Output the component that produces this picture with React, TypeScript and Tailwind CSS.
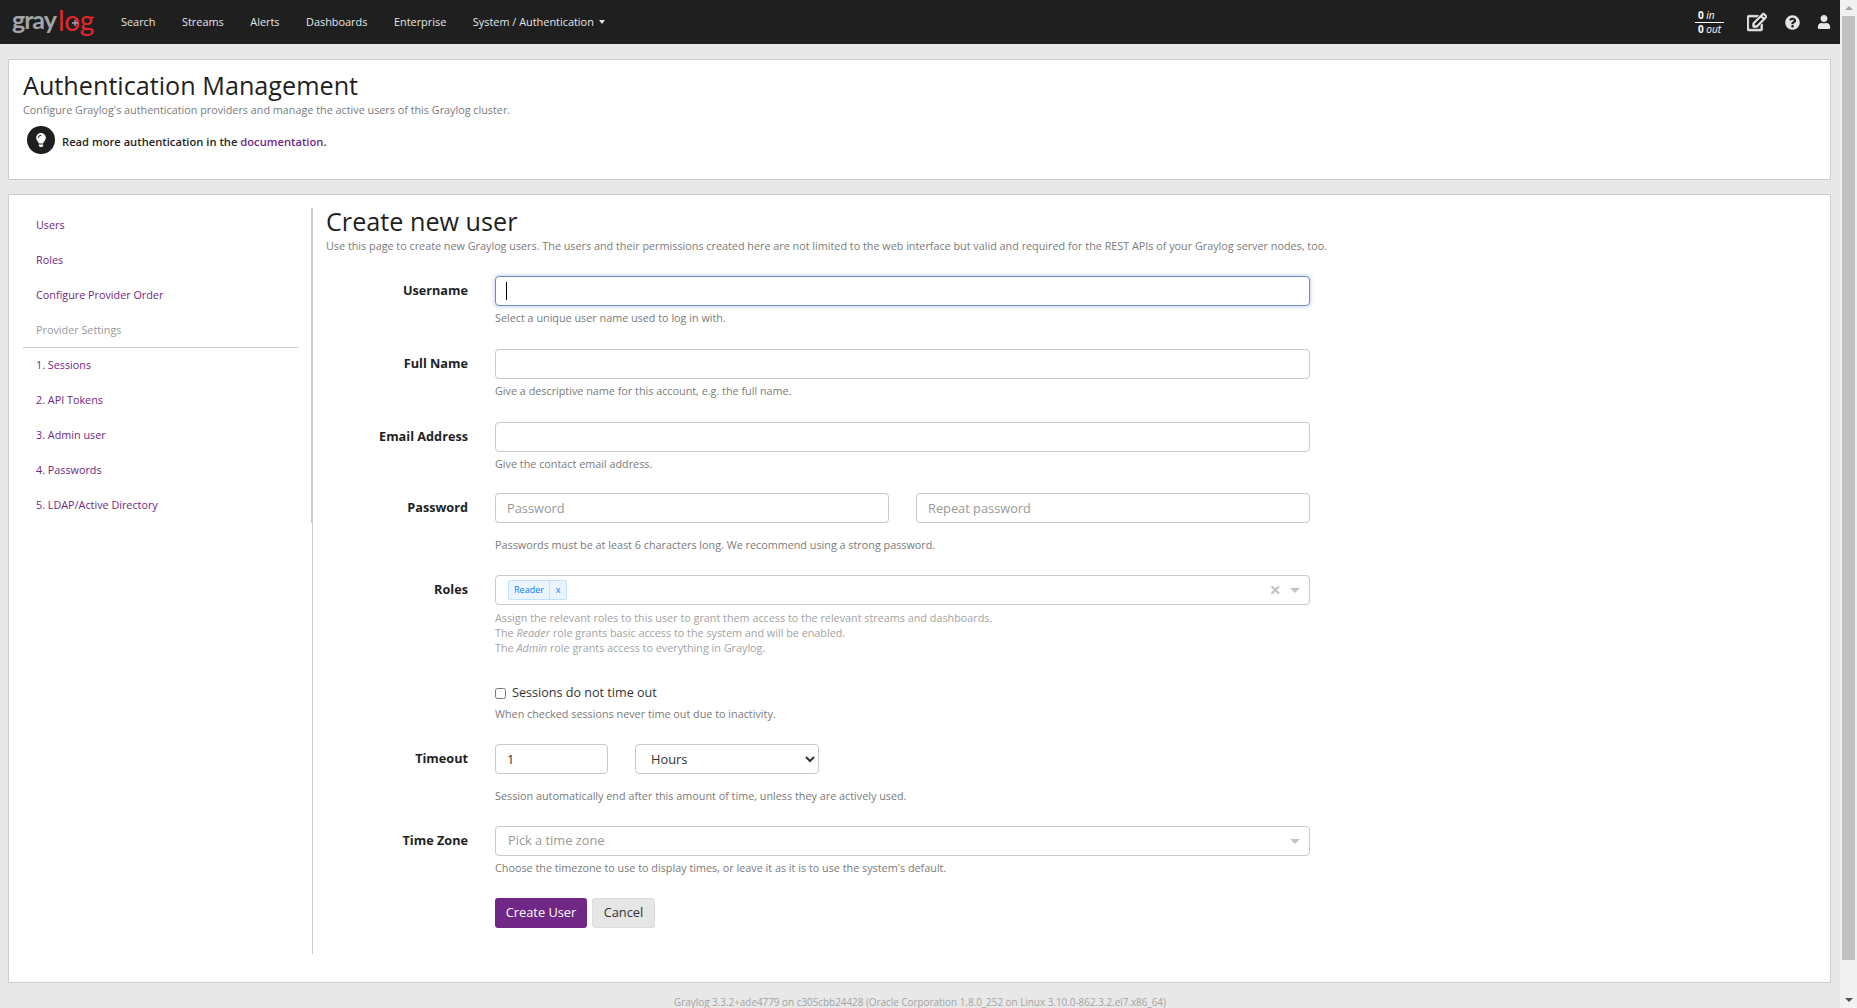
import { FaLightbulb, FaQuestionCircle, FaRegEdit, FaUser } from "react-icons/fa";

const navItems = ["Search", "Streams", "Alerts", "Dashboards", "Enterprise"];

const sideTop = ["Users", "Roles", "Configure Provider Order"];
const sideProviders = ["1. Sessions", "2. API Tokens", "3. Admin user", "4. Passwords", "5. LDAP/Active Directory"];

const fieldClass =
  "h-[30px] rounded-[4px] border bg-white px-[11px] text-[12.8px] text-[#333] placeholder:text-[#999] outline-none";
const helpClass = "text-[10.8px] leading-[17px] text-[#7b7b7b]";

const Arrow = () => <span className="h-0 w-0 border-x-[5px] border-t-[5px] border-x-transparent border-t-[#c4c4c4]" />;

const Label = ({ children }: { children: string }) => (
  <label className="w-[169px] shrink-0 pr-[27px] pt-[3.5px] text-right text-[12.7px] leading-[20px] font-bold text-[#1f1f1f]">
    {children}
  </label>
);

const Logo = () => (
  <div className="relative flex h-[44px] w-[108px] items-center pl-[12px] font-['Lato',sans-serif] leading-none">
    <span className="-mt-[5px] text-[25px] font-bold tracking-[-1px] text-[#a3a5a8]">gray</span>
    <span className="-mt-[5px] ml-[2px] text-[28px] tracking-[-0.3px] text-[#e3262f]">log</span>
    <svg className="absolute top-[20px] left-[72px] h-[6px] w-[6px]" viewBox="0 0 6 6">
      <path d="M3 0v6M0 3h6" stroke="#a3a5a8" strokeWidth="1.4" />
    </svg>
  </div>
);

const TopBar = () => (
  <header className="flex h-[44px] shrink-0 items-center bg-[#1f1f1f] text-[10.9px] text-[#e6e6e6]">
    <Logo />
    <nav className="flex items-center gap-[26.5px] pl-[13px]">
      {navItems.map((item) => (
        <a key={item} className="cursor-pointer">
          {item}
        </a>
      ))}
      <a className="flex cursor-pointer items-center gap-[5px]">
        System / Authentication
        <span className="h-0 w-0 border-x-[3.5px] border-t-[4px] border-x-transparent border-t-[#e6e6e6]" />
      </a>
    </nav>
    <div className="ml-auto flex items-center pr-[9px]">
      <div className="mr-[23px] flex w-[29px] flex-col text-[10px] leading-[13px] font-bold text-white">
        <span className="w-full border-b border-white pl-[3px]">
          0 <i className="font-normal">in</i>
        </span>
        <span className="pl-[3px] whitespace-nowrap">
          0 <i className="font-normal">out</i>
        </span>
      </div>
      <FaRegEdit className="mr-[18px] text-[20px]" stroke="currentColor" strokeWidth={20} />
      <FaQuestionCircle className="mr-[17px] text-[15px]" />
      <FaUser className="text-[14px]" />
    </div>
  </header>
);

const Sidebar = () => (
  <aside className="w-[289px] shrink-0 self-start border-r border-[#cccccc] pr-[13px] text-[10.8px] text-[#702785]">
    {sideTop.map((item) => (
      <a key={item} className="flex h-[35px] items-center px-[13px] pb-px">
        {item}
      </a>
    ))}
    <div className="flex h-[35px] items-center border-b border-[#cccccc] px-[13px] text-[#9a9a9a]">Provider Settings</div>
    {sideProviders.map((item) => (
      <a key={item} className="flex h-[35px] items-center px-[13px] pb-px">
        {item}
      </a>
    ))}
  </aside>
);

const CreateUserForm = () => (
  <section className="h-[746px] flex-1 border-l border-[#cccccc] pl-[13px]">
    <h1 className="-mt-px text-[25.2px] leading-[28px] text-[#1f1f1f]">Create new user</h1>
    <p className="mt-[3px] text-[10.8px] leading-[16px] text-[#7b7b7b]">
      Use this page to create new Graylog users. The users and their permissions created here are not limited to the web
      interface but valid and required for the REST APIs of your Graylog server nodes, too.
    </p>

    <div className="mt-[22px] w-[984px]">
      <div className="flex">
        <Label>Username</Label>
        <div className="flex-1">
          <div className="relative">
            <input className={`${fieldClass} w-full border-[#6b8bc9] shadow-[0_0_4px_rgba(102,130,200,0.5)]`} />
            <span className="absolute top-[6px] left-[11px] h-[18px] w-px bg-black" />
          </div>
          <p className={`mt-[3px] ${helpClass}`}>Select a unique user name used to log in with.</p>
        </div>
      </div>

      <div className="mt-[23px] flex">
        <Label>Full Name</Label>
        <div className="flex-1">
          <input className={`${fieldClass} w-full border-[#c9c9c9]`} />
          <p className={`mt-[3px] ${helpClass}`}>Give a descriptive name for this account, e.g. the full name.</p>
        </div>
      </div>

      <div className="mt-[23px] flex">
        <Label>Email Address</Label>
        <div className="flex-1">
          <input className={`${fieldClass} w-full border-[#c9c9c9]`} />
          <p className={`mt-[3px] ${helpClass}`}>Give the contact email address.</p>
        </div>
      </div>

      <div className="mt-[21px] flex">
        <Label>Password</Label>
        <div className="flex-1">
          <div className="flex gap-[27px]">
            <input className={`${fieldClass} w-[394px] border-[#c9c9c9]`} placeholder="Password" />
            <input className={`${fieldClass} min-w-0 flex-1 border-[#c9c9c9]`} placeholder="Repeat password" />
          </div>
          <p className={`mt-[13px] ${helpClass}`}>Passwords must be at least 6 characters long. We recommend using a strong password.</p>
        </div>
      </div>

      <div className="mt-[22px] flex">
        <Label>Roles</Label>
        <div className="flex-1">
          <div className="flex h-[30px] items-center rounded-[4px] border border-[#c9c9c9] bg-white pr-[9px] pl-[12px]">
            <span className="flex h-[20px] items-center rounded-[2px] border border-[#c2e0ff] bg-[#ebf5ff] text-[9px] text-[#007eff]">
              <span className="flex h-full w-[41px] items-center justify-center border-r border-[#c2e0ff]">Reader</span>
              <span className="flex h-full w-[16px] items-center justify-center">x</span>
            </span>
            <span className="mr-[9px] ml-auto text-[20px] leading-none font-bold text-[#c4c4c4]">×</span>
            <Arrow />
          </div>
          <div className="mt-[5px] text-[10.8px] leading-[15px] text-[#a3a3a3]">
            <p>Assign the relevant roles to this user to grant them access to the relevant streams and dashboards.</p>
            <p>
              The <i>Reader</i> role grants basic access to the system and will be enabled.
            </p>
            <p>
              The <i>Admin</i> role grants access to everything in Graylog.
            </p>
          </div>
        </div>
      </div>

      <div className="mt-[28px] flex">
        <div className="w-[169px] shrink-0" />
        <div className="flex-1">
          <label className="flex h-[20px] items-center gap-[6px] text-[12.6px] text-[#333]">
            <input type="checkbox" className="m-0 h-[11px] w-[11px]" />
            Sessions do not time out
          </label>
          <p className={`mt-[2px] ${helpClass}`}>When checked sessions never time out due to inactivity.</p>
        </div>
      </div>

      <div className="mt-[22px] flex">
        <Label>Timeout</Label>
        <div className="flex-1">
          <div className="flex gap-[27px]">
            <input className={`${fieldClass} w-[113px] border-[#c9c9c9]`} defaultValue="1" />
            <select className="h-[30px] w-[184px] rounded-[4px] border border-[#c9c9c9] bg-white pl-[11px] text-[12.8px] text-[#333]">
              <option>Hours</option>
            </select>
          </div>
          <p className={`mt-[13px] ${helpClass}`}>Session automatically end after this amount of time, unless they are actively used.</p>
        </div>
      </div>

      <div className="mt-[22px] flex">
        <Label>Time Zone</Label>
        <div className="flex-1">
          <div className="flex h-[30px] items-center justify-between rounded-[4px] border border-[#c9c9c9] bg-white pr-[9px] pl-[12px] text-[12.8px] text-[#999]">
            Pick a time zone
            <Arrow />
          </div>
          <p className={`mt-[3px] ${helpClass}`}>Choose the timezone to use to display times, or leave it as it is to use the system's default.</p>
        </div>
      </div>

      <div className="mt-[22px] flex">
        <div className="w-[169px] shrink-0" />
        <div className="flex gap-[5px] text-[12.8px]">
          <button className="h-[30px] w-[92px] rounded-[3px] bg-[#702785] text-white">Create User</button>
          <button className="h-[30px] w-[63px] rounded-[3px] border border-[#dcdcdc] bg-[#e6e6e6] text-[#333]">Cancel</button>
        </div>
      </div>
    </div>
  </section>
);

const Scrollbar = () => (
  <div className="flex w-[17px] shrink-0 flex-col items-center bg-[#f1f1f1]">
    <div className="flex h-[16px] shrink-0 items-center justify-center">
      <span className="h-0 w-0 border-x-[4px] border-b-[4px] border-x-transparent border-b-[#a3a3a3]" />
    </div>
    <div className="h-[944px] w-[13px] shrink-0 bg-[#c1c1c1]" />
    <div className="flex flex-1 items-end justify-center pb-[6px]">
      <span className="h-0 w-0 border-x-[4px] border-t-[4px] border-x-transparent border-t-[#505050]" />
    </div>
  </div>
);

export default function App() {
  return (
    <div className="flex h-screen overflow-hidden bg-[#e8e8e8] font-['Open_Sans',sans-serif]">
      <div className="flex min-w-0 flex-1 flex-col overflow-hidden">
        <TopBar />
        <main className="mt-[15px] mr-[9px] ml-[8px] flex flex-col gap-[14px]">
          <section className="h-[121px] shrink-0 rounded-[1px] border border-[#cccccc] bg-white pt-[10px] pl-[14px]">
            <h1 className="text-[25.2px] leading-[30px] text-[#1f1f1f]">Authentication Management</h1>
            <p className="mt-[2px] text-[10.8px] leading-[16px] text-[#7b7b7b]">
              Configure Graylog's authentication providers and manage the active users of this Graylog cluster.
            </p>
            <div className="mt-[8px] flex items-center pl-[4px]">
              <span className="flex h-[28px] w-[28px] items-center justify-center rounded-full bg-[#1f1f1f] text-white">
                <FaLightbulb className="text-[14px]" />
              </span>
              <p className="mt-[5px] ml-[7px] text-[11.2px] font-semibold text-[#1f1f1f]">
                Read more authentication in the <a className="text-[#702785]">documentation</a>.
              </p>
            </div>
          </section>

          <section className="flex h-[789px] shrink-0 rounded-[1px] border border-[#cccccc] bg-white pt-[13px] pl-[14px]">
            <Sidebar />
            <CreateUserForm />
          </section>
        </main>
        <footer className="mt-[12px] text-center text-[9.9px] leading-[14px] whitespace-nowrap text-[#a3a3a3]">
          Graylog 3.3.2+ade4779 on c305cbb24428 (Oracle Corporation 1.8.0_252 on Linux 3.10.0-862.3.2.el7.x86_64)
        </footer>
      </div>
      <Scrollbar />
    </div>
  );
}
